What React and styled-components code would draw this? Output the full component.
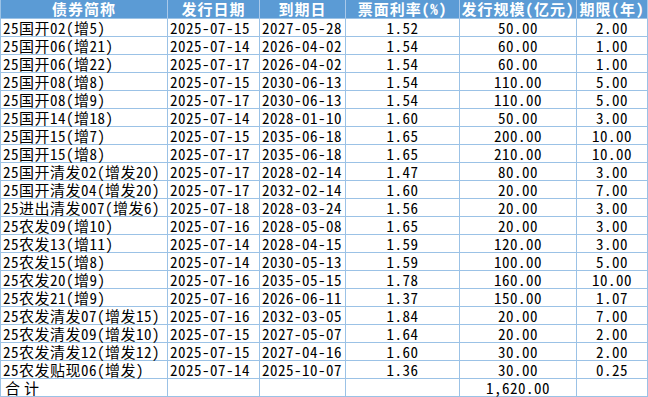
import React from "react";
import styled, { createGlobalStyle } from "styled-components";

const GlobalStyle = createGlobalStyle`
  body {
    margin: 0;
    background: #ffffff;
  }
`;

const rows = [
  ["25国开02(增5)", "2025-07-15", "2027-05-28", "1.52", "50.00", "2.00"],
  ["25国开06(增21)", "2025-07-14", "2026-04-02", "1.54", "60.00", "1.00"],
  ["25国开06(增22)", "2025-07-17", "2026-04-02", "1.54", "60.00", "1.00"],
  ["25国开08(增8)", "2025-07-15", "2030-06-13", "1.54", "110.00", "5.00"],
  ["25国开08(增9)", "2025-07-17", "2030-06-13", "1.54", "110.00", "5.00"],
  ["25国开14(增18)", "2025-07-14", "2028-01-10", "1.60", "50.00", "3.00"],
  ["25国开15(增7)", "2025-07-15", "2035-06-18", "1.65", "200.00", "10.00"],
  ["25国开15(增8)", "2025-07-17", "2035-06-18", "1.65", "210.00", "10.00"],
  ["25国开清发02(增发20)", "2025-07-17", "2028-02-14", "1.47", "80.00", "3.00"],
  ["25国开清发04(增发20)", "2025-07-17", "2032-02-14", "1.60", "20.00", "7.00"],
  ["25进出清发007(增发6)", "2025-07-18", "2028-03-24", "1.56", "20.00", "3.00"],
  ["25农发09(增10)", "2025-07-16", "2028-05-08", "1.65", "20.00", "3.00"],
  ["25农发13(增11)", "2025-07-14", "2028-04-15", "1.59", "120.00", "3.00"],
  ["25农发15(增8)", "2025-07-14", "2030-05-13", "1.59", "100.00", "5.00"],
  ["25农发20(增9)", "2025-07-16", "2035-05-15", "1.78", "160.00", "10.00"],
  ["25农发21(增9)", "2025-07-16", "2026-06-11", "1.37", "150.00", "1.07"],
  ["25农发清发07(增发15)", "2025-07-16", "2032-03-05", "1.84", "20.00", "7.00"],
  ["25农发清发09(增发10)", "2025-07-15", "2027-05-07", "1.64", "20.00", "2.00"],
  ["25农发清发12(增发12)", "2025-07-15", "2027-04-16", "1.60", "30.00", "2.00"],
  ["25农发贴现06(增发)", "2025-07-14", "2025-10-07", "1.36", "30.00", "0.25"],
];

const headers = ["债券简称", "发行日期", "到期日", "票面利率(%)", "发行规模(亿元)", "期限(年)"];
const aligns = ["left", "left", "left", "center", "center", "center"];

const Sheet = styled.div`
  width: 648px;
  height: 397px;
  border-left: 1px solid #9bc2e6;
  box-sizing: border-box;
  font-family: "Noto Sans Mono CJK SC", "DejaVu Sans Mono", "Noto Sans CJK SC", monospace;
  font-size: 15px;
  letter-spacing: 0.5px;
  color: #000000;
  overflow: hidden;
`;

const Row = styled.div`
  display: grid;
  grid-template-columns: 167px 92px 86px 114px 117px 71px;
  height: ${(p) => (p.$head ? 19 : 18)}px;
  background: ${(p) => (p.$head ? "#5b9bd5" : "#ffffff")};
`;

const Cell = styled.div`
  box-sizing: border-box;
  border-right: 1px solid #9bc2e6;
  border-bottom: 1px solid #9bc2e6;
  padding-left: ${(p) => (p.$align === "left" ? p.$pad || 2 : 0)}px;
  text-align: ${(p) => p.$align};
  line-height: 17px;
  white-space: nowrap;
`;

const HeadCell = styled(Cell)`
  color: #ffffff;
  font-weight: bold;
  text-align: center;
  padding-left: 0;
  line-height: 18px;
  letter-spacing: 1px;
  border-right-color: #a9c9ea;
`;

const TotalLabel = styled(Cell)`
  letter-spacing: 4px;
`;

export default function App() {
  return (
    <>
      <GlobalStyle />
      <Sheet>
        <Row $head>
          {headers.map((h) => (
            <HeadCell key={h}>{h}</HeadCell>
          ))}
        </Row>
        {rows.map((r) => (
          <Row key={r[0]}>
            {r.map((v, i) => (
              <Cell key={i} $align={aligns[i]}>
                {v}
              </Cell>
            ))}
          </Row>
        ))}
        <Row>
          <TotalLabel $align="left" $pad={4}>合计</TotalLabel>
          <Cell $align="left" />
          <Cell $align="left" />
          <Cell $align="center" />
          <Cell $align="center">1,620.00</Cell>
          <Cell $align="center" />
        </Row>
      </Sheet>
    </>
  );
}
